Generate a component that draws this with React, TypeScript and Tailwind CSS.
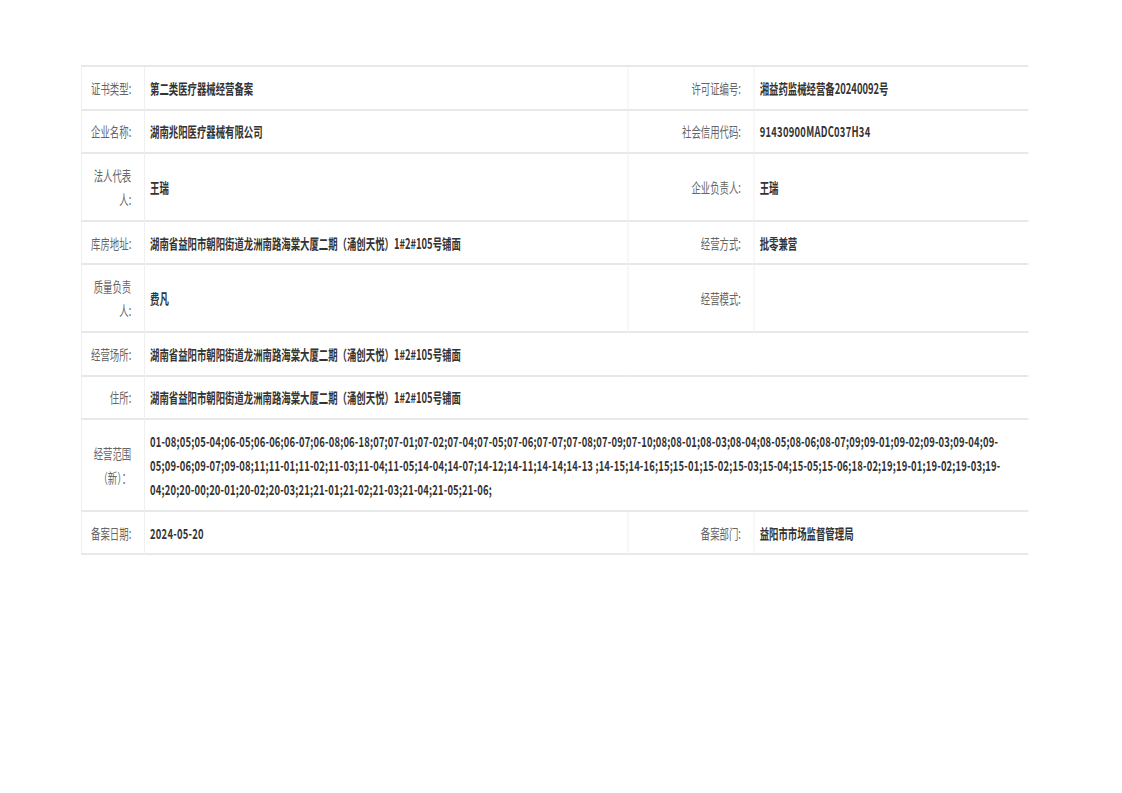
const FONT = { fontFamily: '"Microsoft YaHei", "Noto Sans CJK SC", "Noto Sans", sans-serif' };

const SCOPE_LINES = [
  "01-08;05;05-04;06-05;06-06;06-07;06-08;06-18;07;07-01;07-02;07-04;07-05;07-06;07-07;07-08;07-09;07-10;08;08-01;08-03;08-04;08-05;08-06;08-07;09;09-01;09-02;09-03;09-04;09-",
  "05;09-06;09-07;09-08;11;11-01;11-02;11-03;11-04;11-05;14-04;14-07;14-12;14-11;14-14;14-13 ;14-15;14-16;15;15-01;15-02;15-03;15-04;15-05;15-06;18-02;19;19-01;19-02;19-03;19-",
  "04;20;20-00;20-01;20-02;20-03;21;21-01;21-02;21-03;21-04;21-05;21-06;",
];

const cellBase = "border-b-2 border-[#e8e8e8] py-[8.8px] align-middle";
const labelCls = `${cellBase} border-l-[1.5px] text-right text-[#666] font-normal pl-[10px] pr-[19px]`;
const valueCls = `${cellBase} border-l-[1.5px] text-left text-[#333] font-bold pl-[8px] pr-[10px]`;

function Label({ children }: { children: React.ReactNode }) {
  return <td className={labelCls}>{children}</td>;
}

function Value({ children, span }: { children?: React.ReactNode; span?: number }) {
  return (
    <td className={valueCls} colSpan={span}>
      {children}
    </td>
  );
}

const ADDRESS = "湖南省益阳市朝阳街道龙洲南路海棠大厦二期（涌创天悦）1#2#105号铺面";

export default function App() {
  return (
    <div className="min-h-screen w-full overflow-hidden bg-white pl-[81px] pt-[65px]" style={FONT}>
      <div className="w-[1413px] origin-top-left scale-x-[0.67]">
        <table className="w-full table-fixed border-collapse border-t-2 border-[#e8e8e8] text-[14px] leading-6">
          <colgroup>
            <col className="w-[94px]" />
            <col className="w-[722px]" />
            <col className="w-[188px]" />
            <col className="w-[409px]" />
          </colgroup>
          <tbody>
            <tr>
              <Label>证书类型:</Label>
              <Value>第二类医疗器械经营备案</Value>
              <Label>许可证编号:</Label>
              <Value>湘益药监械经营备20240092号</Value>
            </tr>
            <tr>
              <Label>企业名称:</Label>
              <Value>湖南兆阳医疗器械有限公司</Value>
              <Label>社会信用代码:</Label>
              <Value><span className="tracking-[0.4px]">91430900MADC037H34</span></Value>
            </tr>
            <tr>
              <Label>法人代表人:</Label>
              <Value>王瑞</Value>
              <Label>企业负责人:</Label>
              <Value>王瑞</Value>
            </tr>
            <tr>
              <Label>库房地址:</Label>
              <Value>{ADDRESS}</Value>
              <Label>经营方式:</Label>
              <Value>批零兼营</Value>
            </tr>
            <tr>
              <Label>质量负责人:</Label>
              <Value>费凡</Value>
              <Label>经营模式:</Label>
              <Value />
            </tr>
            <tr>
              <Label>经营场所:</Label>
              <Value span={3}>{ADDRESS}</Value>
            </tr>
            <tr>
              <Label>住所:</Label>
              <Value span={3}>{ADDRESS}</Value>
            </tr>
            <tr>
              <Label>经营范围（新）：</Label>
              <Value span={3}>
                {SCOPE_LINES.map((line) => (
                  <div key={line} className="whitespace-nowrap tracking-[0.28px]">
                    {line}
                  </div>
                ))}
              </Value>
            </tr>
            <tr>
              <Label>备案日期:</Label>
              <Value><span className="tracking-[0.4px]">2024-05-20</span></Value>
              <Label>备案部门:</Label>
              <Value>益阳市市场监督管理局</Value>
            </tr>
          </tbody>
        </table>
      </div>
    </div>
  );
}
